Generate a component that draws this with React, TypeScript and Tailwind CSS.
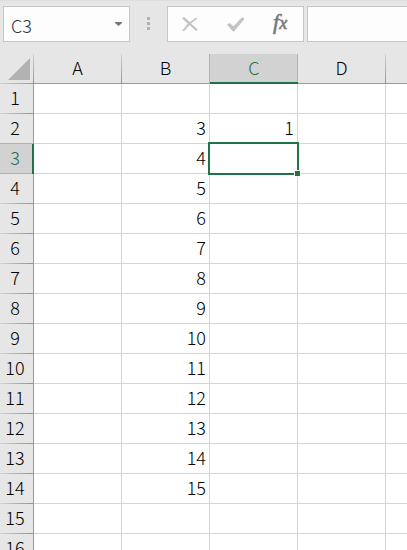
const columns = ["A", "B", "C", "D", ""];
const rows = Array.from({ length: 16 }, (_, i) => i + 1);

function cellValue(row: number, column: string) {
  if (column === "B" && row >= 2 && row <= 14) return String(row + 1);
  if (column === "C" && row === 2) return "1";
  return "";
}

function FormulaBar() {
  return (
    <div className="flex h-[54px] shrink-0 items-start border-t border-[#dedede] pl-[3px] pt-[5px]">
      <div className="flex h-9 w-[127px] shrink-0 items-center justify-between border border-[#c6c6c6] bg-[#fdfdfd] pl-[7px] pr-[7px] text-[#333]">
        <span className="pt-px leading-none">C3</span>
        <svg className="mb-px h-1 w-[7px]" viewBox="0 0 7 4" fill="#777">
          <path d="M0 0h7v1L3.5 4 0 1z" />
        </svg>
      </div>
      <div className="ml-[17px] mt-[11px] flex w-[3px] shrink-0 flex-col gap-[2px]">
        <i className="size-[3px] bg-[#b1b1b1]" />
        <i className="size-[3px] bg-[#b1b1b1]" />
        <i className="size-[3px] bg-[#b1b1b1]" />
      </div>
      <div className="ml-[17px] flex h-9 w-[137px] shrink-0 items-start border border-[#c6c6c6] bg-[#fdfdfd]">
        <svg className="ml-[14px] mt-[10px] h-[15px] w-4" viewBox="0 0 16 15" fill="#c3c3c3">
          <path d="M0 1.2 2.2 0 7.7 5.2 13.8.8 15.6 1.2 9 6.6 15.7 12.4 14.2 14 7.5 8.1 2.2 14 .2 13.4 5.8 6.8z" />
        </svg>
        <svg className="ml-[29px] mt-[10px] h-[15px] w-[17px]" viewBox="0 0 17 15" fill="#c3c3c3">
          <path d="M0 7.5 2.5 6 6.5 9.2 14.5.8 17 .5V2.5L7 14.5 5.5 14z" />
        </svg>
        <span className="ml-[29px] mt-[2px] font-['Liberation_Serif',serif] text-[22px] font-normal italic leading-[25px] text-[#777] [-webkit-text-stroke:0.6px_#777]">
          f<span className="text-[18px]">x</span>
        </span>
      </div>
      <div className="ml-[3px] h-9 flex-1 border border-r-0 border-[#c6c6c6] bg-[#fdfdfd]" />
    </div>
  );
}

function ColumnHeaders() {
  return (
    <div className="flex h-[30px] shrink-0">
      <div className="flex w-[34px] shrink-0">
        <div className="flex w-[33px] flex-col">
          <svg className="ml-2 mt-1 h-[22px] w-[22px]" viewBox="0 0 22 22" fill="#b2b2b2">
            <path d="M22 0v22H0z" />
          </svg>
          <div className="mt-auto h-px bg-linear-to-r from-[#d0d0d0] to-[#999]" />
        </div>
        <div className="w-px bg-linear-to-b from-[#d2d2d2] to-[#929292]" />
      </div>
      {columns.map((column) => {
        const active = column === "C";
        return (
          <div key={column} className="flex h-[30px] w-[88px] shrink-0">
            <div
              className={`flex w-[87px] items-start justify-center ${
                active
                  ? "border-b-2 border-[#217346] bg-[#d2d2d2] pl-px text-[#217346]"
                  : "border-b border-[#999]"
              }`}
            >
              <span className="-mt-px leading-[29px]">{column}</span>
            </div>
            <div
              className={
                active
                  ? "w-px border-b-2 border-[#217346] bg-[#b2b2b2]"
                  : column === "B"
                    ? "w-px bg-[#b2b2b2]"
                    : "w-px bg-linear-to-b from-[#d2d2d2] to-[#929292]"
              }
            />
          </div>
        );
      })}
    </div>
  );
}

function GridRow({ row }: { row: number }) {
  const active = row === 3;
  return (
    <div className="flex h-[30px] shrink-0">
      <div
        className={`flex w-[34px] shrink-0 ${active ? "bg-[#d2d2d2] text-[#217346]" : ""}`}
      >
        <div className={`flex flex-col ${active ? "w-8" : "w-[33px]"}`}>
          <div className="flex h-[29px] w-[30px] items-start justify-center leading-[27px]">
            {row}
          </div>
          <div
            className={`h-px ${
              row === 2 || active ? "bg-[#b2b2b2]" : "bg-linear-to-r from-[#d2d2d2] to-[#929292]"
            }`}
          />
        </div>
        <div className={active ? "w-0.5 bg-[#217346]" : "w-px bg-[#999]"} />
      </div>
      {columns.map((column) => (
        <div
          key={column}
          className="flex w-[88px] shrink-0 items-start justify-end border-b border-r border-[#d4d4d4] bg-white pr-[3px] leading-[27px]"
        >
          {cellValue(row, column)}
        </div>
      ))}
    </div>
  );
}

export default function App() {
  return (
    <div className="relative flex h-[550px] w-[407px] flex-col overflow-hidden bg-[#e6e6e6] font-['Noto_Sans_CJK_JP',sans-serif] text-[18px] font-light leading-[29px] text-black">
      <FormulaBar />
      <ColumnHeaders />
      {rows.map((row) => (
        <GridRow key={row} row={row} />
      ))}
      <div className="absolute left-[208px] top-[142px] h-[33px] w-[91px] border-2 border-[#217346]">
        <div className="absolute -bottom-[4px] -right-[4px] size-[7px] border border-white bg-[#217346]" />
      </div>
    </div>
  );
}
